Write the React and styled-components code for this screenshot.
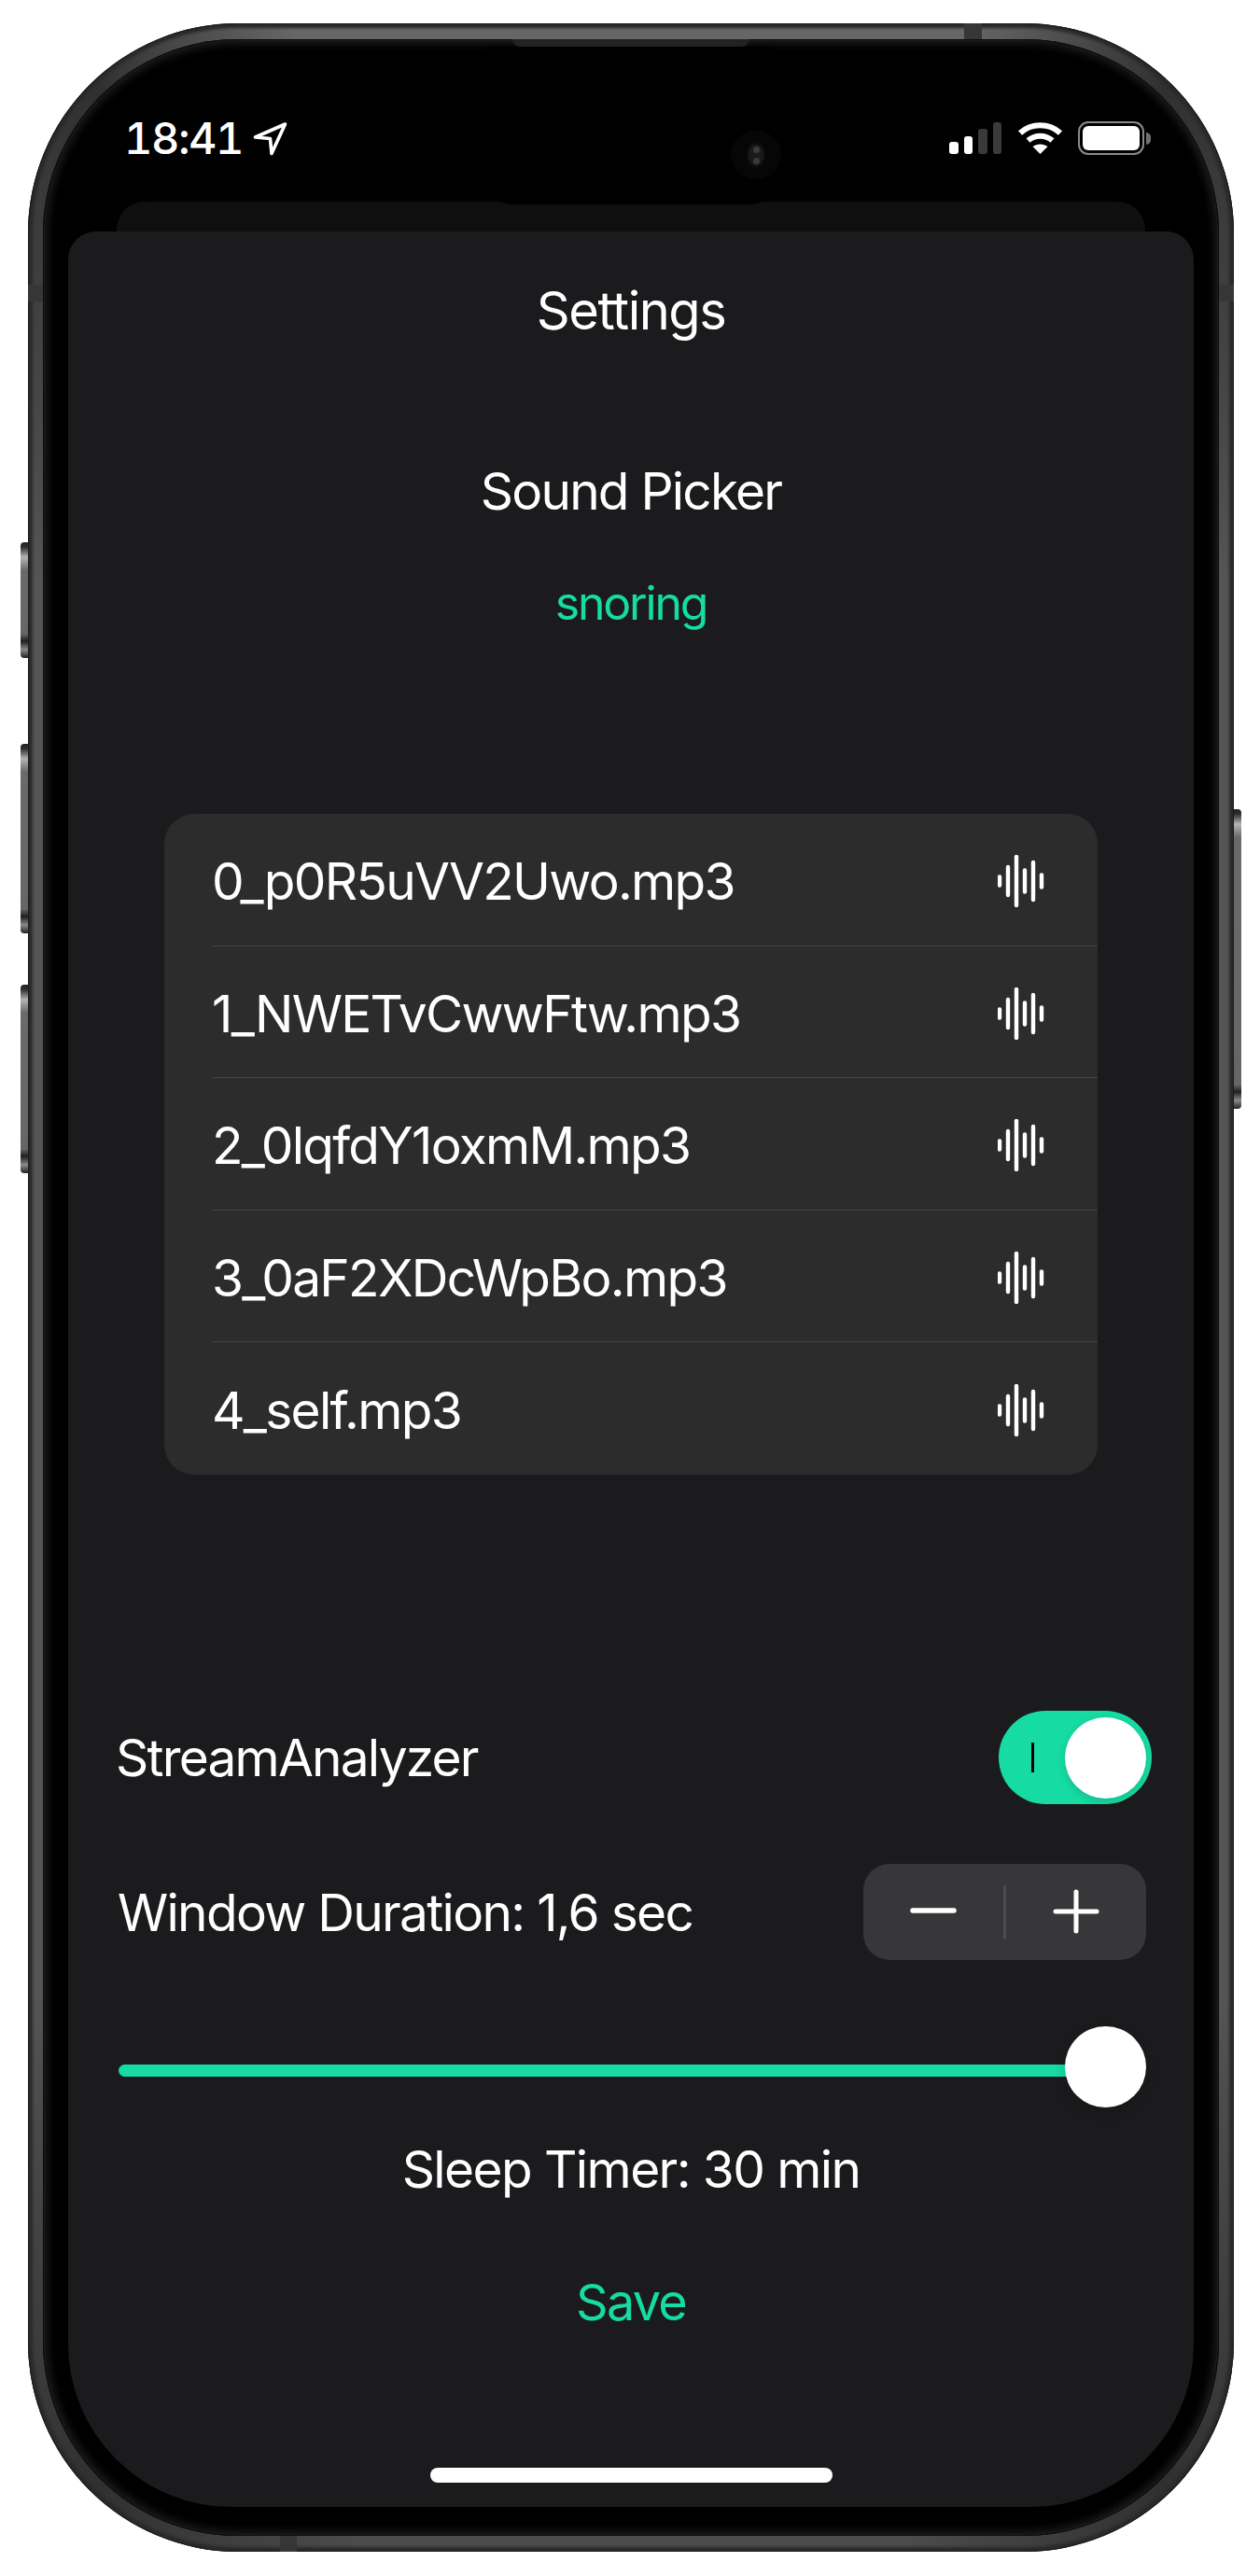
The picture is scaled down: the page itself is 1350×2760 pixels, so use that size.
import React from "react";
import styled, { createGlobalStyle } from "styled-components";

const GREEN = "#16dba3";

const Global = createGlobalStyle`
  html, body { margin: 0; padding: 0; background: #fff; }
  body { font-family: "Inter", "Liberation Sans", sans-serif; color: #fff; }
`;

const Device = styled.div`
  position: relative;
  box-sizing: border-box;
  width: 1292px;
  height: 2709px;
  margin: 25px 0 26px 30px;
  padding: 17px 16px;
  border-radius: 225px;
  background: conic-gradient(from 0deg at 50% 50%,
    #666 0deg, #666 15deg, #303030 24deg, #555 40deg, #555 140deg, #303030 156deg,
    #4c4c4c 168deg, #4c4c4c 192deg, #303030 204deg, #555 220deg, #555 320deg, #303030 336deg, #666 345deg);
  box-shadow: inset 0 0 0 1px #1a1a1a, inset 0 0 3px 5px #2a2a2a;
`;

const SideButton = styled.div`
  position: absolute;
  top: ${(p) => p.$top}px;
  height: ${(p) => p.$height}px;
  width: 8px;
  ${(p) => (p.$right ? "right: -8px; border-radius: 0 4px 4px 0;" : "left: -8px; border-radius: 4px 0 0 4px;")}
  background: linear-gradient(to bottom, #242424 0, #2c2c2c 5px, #b4b4b4 16px, #6a6a6a 30px, #666 calc(100% - 26px),
    #1f1f1f calc(100% - 18px), #8a8a8a calc(100% - 9px), #222 100%);
`;

const Band = styled.div`
  position: absolute;
  background: #363636;
  ${(p) => p.$pos}
`;

const Bezel = styled.div`
  position: relative;
  box-sizing: border-box;
  height: 100%;
  display: flex;
  flex-direction: column;
  padding: 0 27px 31px;
  border-radius: 209px;
  background: #000;
  box-shadow: inset 0 0 0 1px #0b0b0b, inset 0 0 0 2px #1b1b1b, inset 0 0 10px 5px #1c1c1c;
`;

const Speaker = styled.div`
  position: absolute;
  top: 0;
  left: 503px;
  width: 254px;
  height: 8px;
  border-radius: 0 0 8px 8px;
  background: #222;
`;

const Island = styled.div`
  position: absolute;
  top: 8px;
  left: 476px;
  width: 308px;
  height: 169px;
  border-radius: 0 0 26px 26px;
  background: #000;
`;

const Camera = styled.div`
  position: absolute;
  left: 737px;
  top: 98px;
  width: 54px;
  height: 52px;
  border-radius: 50%;
  background: radial-gradient(ellipse 11px 15px at 50% 50%, #1a1a1c 0, #1a1a1c 68%, #0c0c0d 82%, #060606 100%);
  display: flex;
  flex-direction: column;
  align-items: center;
  justify-content: center;
  gap: 5px;
`;

const CameraDot = styled.span`
  width: 7px;
  height: 7px;
  border-radius: 50%;
  background: #3a3a3c;
`;

const StatusBar = styled.div`
  position: relative;
  box-sizing: border-box;
  height: 174px;
  flex: none;
  display: flex;
  align-items: flex-start;
  padding: 88px 53px 0 60px;
`;

const Time = styled.span`
  font-size: 47px;
  font-weight: 500;
  font-variant-numeric: tabular-nums;
  line-height: 36px;
  letter-spacing: -1.5px;
  height: 36px;
`;

const LocationIcon = styled.svg`
  width: 37px;
  height: 36px;
  margin: 1px 0 0 11px;
  flex: none;
`;

const StatusRight = styled.div`
  margin-left: auto;
  display: flex;
  align-items: flex-start;
`;

const Signal = styled.div`
  display: flex;
  align-items: flex-end;
  gap: 6px;
  height: 34px;
  margin-top: 1px;
`;

const SignalBar = styled.span`
  width: 9.5px;
  height: ${(p) => p.$h}px;
  border-radius: 3px;
  background: ${(p) => (p.$on ? "#fff" : "#3a3a3a")};
`;

const WifiIcon = styled.svg`
  width: 49px;
  height: 35px;
  margin-left: 17px;
`;

const Battery = styled.div`
  box-sizing: border-box;
  position: relative;
  width: 71px;
  height: 36px;
  margin-left: 16px;
  padding: 3px;
  border: 2px solid #8a8a8a;
  border-radius: 11px;
`;

const BatteryFill = styled.div`
  height: 100%;
  border-radius: 6px;
  background: #fff;
`;

const BatteryNub = styled.div`
  position: absolute;
  right: -9px;
  top: 10px;
  width: 5px;
  height: 13px;
  border-radius: 0 6px 6px 0;
  background: #6f6f6f;
`;

const BackPeek = styled.div`
  height: 32px;
  flex: none;
  margin: 0 52px;
  border-radius: 30px 30px 0 0;
  background: #0f0f10;
`;

const Sheet = styled.div`
  flex: 1;
  position: relative;
  display: flex;
  flex-direction: column;
  border-radius: 30px 30px 175px 175px;
  background: #1b1b1d;
`;

const Centered = styled.div`
  text-align: center;
  font-size: ${(p) => p.$size || 55}px;
  font-weight: 380;
  letter-spacing: ${(p) => p.$ls ?? -1.6}px;
  line-height: 62px;
  height: 62px;
  margin-top: ${(p) => p.$mt}px;
  color: ${(p) => (p.$green ? GREEN : "#fff")};
`;

const List = styled.div`
  margin: 195px 0 0 103px;
  width: 1000px;
  border-radius: 32px;
  background: #2c2c2d;
  overflow: hidden;
`;

const Row = styled.div`
  box-sizing: border-box;
  height: 141.5px;
  margin-left: 51px;
  padding: 4px 57px 0 0;
  display: flex;
  align-items: center;
  justify-content: space-between;
  font-size: 55px;
  font-weight: 380;
  letter-spacing: -1.7px;
  border-bottom: ${(p) => (p.$last ? "none" : "1px solid #434345")};
`;

const WaveIcon = styled.svg`
  width: 50px;
  height: 56px;
  flex: none;
`;

const Setting = styled.div`
  display: flex;
  align-items: center;
  justify-content: space-between;
  margin-top: ${(p) => p.$mt}px;
  padding: 0 ${(p) => p.$pr}px 0 ${(p) => p.$pl}px;
  font-size: 55px;
  font-weight: 380;
  letter-spacing: ${(p) => p.$ls}px;
`;

const Toggle = styled.div`
  box-sizing: border-box;
  width: 164px;
  height: 100px;
  border-radius: 50px;
  background: ${GREEN};
  display: flex;
  align-items: center;
  padding: 0 6px 0 35px;
`;

const ToggleMark = styled.span`
  width: 3px;
  height: 32px;
  background: #000;
`;

const Knob = styled.span`
  display: block;
  width: 87px;
  height: 87px;
  border-radius: 50%;
  background: #fff;
  box-shadow: 0 3px 8px rgba(0, 0, 0, 0.15);
`;

const ToggleKnob = styled(Knob)`
  margin-left: auto;
`;

const Stepper = styled.div`
  width: 303px;
  height: 103px;
  border-radius: 28px;
  background: #373739;
  display: flex;
  align-items: center;
  justify-content: space-between;
`;

const StepIcon = styled.svg`
  width: 150px;
  height: 60px;
  flex: none;
`;

const StepDivider = styled.span`
  width: 3px;
  height: 58px;
  border-radius: 2px;
  background: #4d4d4f;
  flex: none;
`;

const Slider = styled.div`
  position: relative;
  height: 87px;
  margin: 71px 51px 0 54px;
`;

const Track = styled.div`
  width: 1020px;
  height: 13px;
  transform: translateY(41px);
  border-radius: 7px 0 0 7px;
  background: ${GREEN};
`;

const SliderKnob = styled(Knob)`
  position: absolute;
  right: 0;
  top: 0;
  box-shadow: 0 6px 14px rgba(0, 0, 0, 0.15);
`;

const HomeIndicator = styled.div`
  width: 431px;
  height: 16px;
  margin: 146px auto 0;
  border-radius: 8px;
  background: #fff;
`;

const Wave = () => {
  const bars = [
    [2, 4.5], [11, 15], [20, 26], [29, 11.5], [38, 20], [47, 6.5],
  ];
  return (
    <WaveIcon viewBox="0 0 50 56">
      {bars.map(([x, h]) => (
        <line key={x} x1={x} x2={x} y1={28 - h} y2={28 + h} stroke="#fff" strokeWidth="4.4" strokeLinecap="round" />
      ))}
    </WaveIcon>
  );
};

const files = ["0_p0R5uVV2Uwo.mp3", "1_NWETvCwwFtw.mp3", "2_0lqfdY1oxmM.mp3", "3_0aF2XDcWpBo.mp3", "4_self.mp3"];

export default function App() {
  return (
    <>
      <Global />
      <Device>
        <SideButton $top={556} $height={124} />
        <SideButton $top={772} $height={203} />
        <SideButton $top={1030} $height={202} />
        <SideButton $right $top={842} $height={321} />
        <Band $pos="top: 0; left: 1003px; width: 19px; height: 17px;" />
        <Band $pos="left: 0; top: 280px; width: 16px; height: 18px;" />
        <Band $pos="right: 0; top: 280px; width: 16px; height: 18px;" />
        <Band $pos="bottom: 0; left: 270px; width: 18px; height: 17px;" />
        <Bezel>
          <StatusBar>
            <Time>18:41</Time>
            <LocationIcon viewBox="0 0 37 36">
              <path d="M34.5 2 L2.5 16 L18.5 17.5 L20 33.5 Z" fill="none" stroke="#fff" strokeWidth="3.6" strokeLinejoin="round" />
            </LocationIcon>
            <StatusRight>
              <Signal>
                <SignalBar $on $h={13} />
                <SignalBar $on $h={19} />
                <SignalBar $h={27} />
                <SignalBar $h={34} />
              </Signal>
              <WifiIcon viewBox="0 0 49 35">
                <path d="M3 12.5 C15 1.5 34 1.5 46 12.5" fill="none" stroke="#fff" strokeWidth="6" />
                <path d="M11.5 20.5 C19 14 30 14 37.5 20.5" fill="none" stroke="#fff" strokeWidth="6" />
                <path d="M16.5 27 C21 23.5 28 23.5 32.5 27 L24.5 35 Z" fill="#fff" />
              </WifiIcon>
              <Battery>
                <BatteryFill />
                <BatteryNub />
              </Battery>
            </StatusRight>
          </StatusBar>
          <BackPeek />
          <Sheet>
            <Centered $mt={54} $size={56} $ls={-1.5}>Settings</Centered>
            <Centered $mt={131} $ls={-1.8}>Sound Picker</Centered>
            <Centered $mt={58} $green $size={50} $ls={-2.2}>snoring</Centered>
            <List>
              {files.map((f, i) => (
                <Row key={f} $last={i === files.length - 1}>
                  <span>{f}</span>
                  <Wave />
                </Row>
              ))}
            </List>
            <Setting $mt={253.5} $pl={51} $pr={45} $ls={-1.8}>
              <span>StreamAnalyzer</span>
              <Toggle>
                <ToggleMark />
                <ToggleKnob />
              </Toggle>
            </Setting>
            <Setting $mt={64} $pl={53} $pr={51} $ls={-1.7}>
              <span>Window Duration: 1,6 sec</span>
              <Stepper>
                <StepIcon viewBox="0 0 150 60">
                  <line x1="53" x2="97" y1="28" y2="28" stroke="#fff" strokeWidth="5.5" strokeLinecap="round" />
                </StepIcon>
                <StepDivider />
                <StepIcon viewBox="0 0 150 60">
                  <path d="M53 29 H97 M75 8 V50" stroke="#fff" strokeWidth="5" strokeLinecap="round" />
                </StepIcon>
              </Stepper>
            </Setting>
            <Slider>
              <Track />
              <SliderKnob />
            </Slider>
            <Centered $mt={35}>Sleep Timer: 30 min</Centered>
            <Centered $mt={81} $green $size={54} $ls={-1.8}>Save</Centered>
            <HomeIndicator />
          </Sheet>
          <Speaker />
          <Island />
          <Camera>
            <CameraDot />
            <CameraDot />
          </Camera>
        </Bezel>
      </Device>
    </>
  );
}
